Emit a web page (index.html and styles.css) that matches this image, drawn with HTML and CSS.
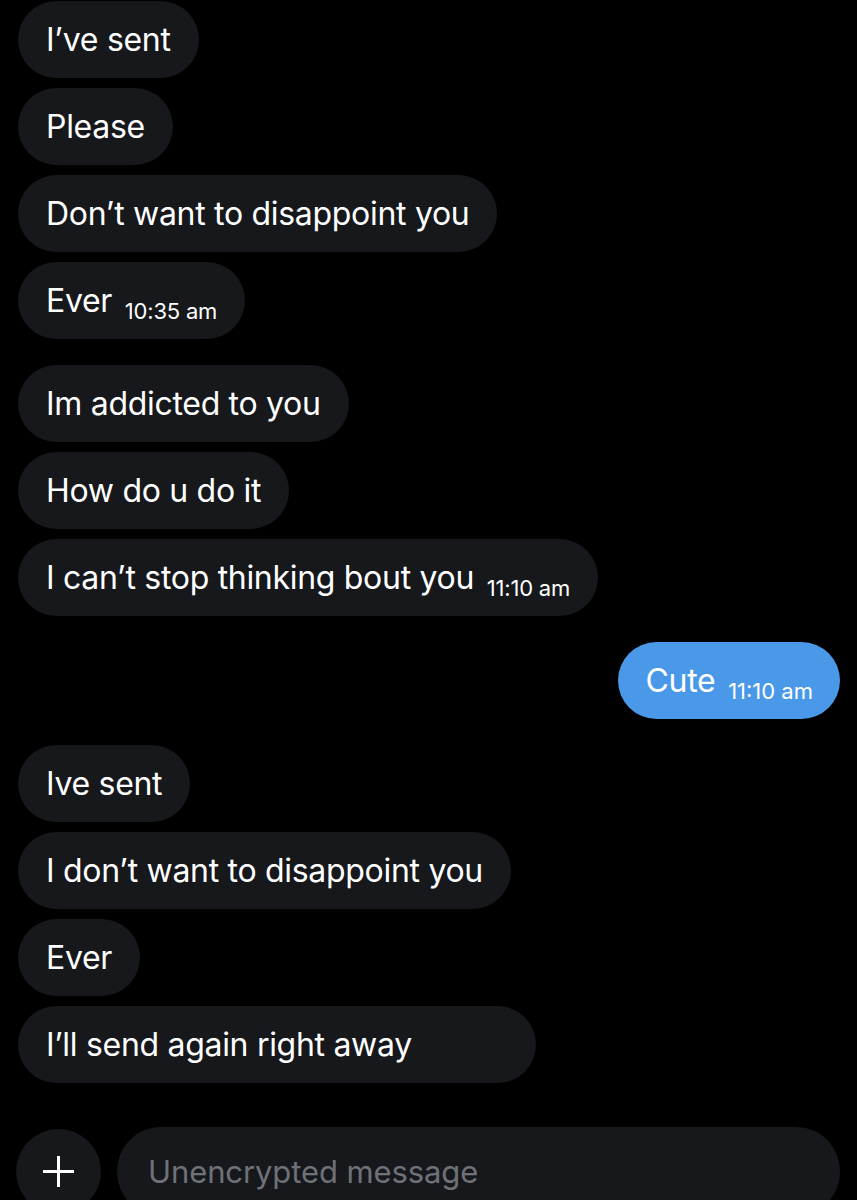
FILE: index.html
```html
<!DOCTYPE html>
<html lang="en">
<head>
    <meta charset="UTF-8">
    <meta name="viewport" content="width=device-width, initial-scale=1.0">
    <title>Messages</title>
    <link rel="stylesheet" href="styles.css">
</head>
<body>
    <div class="thread">
        <div class="group">
            <div class="bubble">I’ve sent</div>
            <div class="bubble">Please</div>
            <div class="bubble">Don’t want to disappoint you</div>
            <div class="bubble">Ever <span class="time">10:35 am</span></div>
        </div>
        <div class="group">
            <div class="bubble">Im addicted to you</div>
            <div class="bubble">How do u do it</div>
            <div class="bubble">I can’t stop thinking bout you <span class="time">11:10 am</span></div>
        </div>
        <div class="group mine">
            <div class="bubble">Cute <span class="time">11:10 am</span></div>
        </div>
        <div class="group">
            <div class="bubble">Ive sent</div>
            <div class="bubble">I don’t want to disappoint you</div>
            <div class="bubble">Ever</div>
            <div class="bubble">I’ll send again right away <span class="time hidden">11:10 am</span></div>
        </div>
    </div>

    <div class="composer">
        <button class="plus" type="button">
            <svg width="31" height="31" viewBox="0 0 31 31">
                <path d="M15.5 0v31M0 15.5h31" stroke="#fff" stroke-width="3" fill="none"/>
            </svg>
        </button>
        <div class="input">Unencrypted message</div>
    </div>
</body>
</html>
```

FILE: styles.css
```css
html, body {
    height: 100%;
    overflow: hidden;
}
body {
    margin: 0;
    background: #000;
    color: #fff;
    font-family: Inter, "Noto Sans", sans-serif;
}
.thread {
    display: flex;
    flex-direction: column;
    gap: 26px;
    padding: 1px 18px 0;
}
.group {
    display: flex;
    flex-direction: column;
    align-items: flex-start;
    gap: 10px;
}
.group.mine {
    align-items: flex-end;
    margin-right: -1px;
}
.bubble {
    box-sizing: border-box;
    height: 77px;
    background: #16181c;
    border-radius: 39px;
    padding: 0 28px;
    font-size: 32px;
    line-height: 77px;
    letter-spacing: -0.3px;
    white-space: nowrap;
}
.mine .bubble {
    background: #4a99e9;
    padding-right: 27px;
}
.time {
    font-size: 22px;
    line-height: 1;
    letter-spacing: -0.2px;
    margin-left: 4px;
    position: relative;
    top: 7px;
}
.mine .time {
    letter-spacing: 0;
}
.time.hidden {
    visibility: hidden;
}
.composer {
    display: flex;
    align-items: center;
    gap: 16px;
    margin-top: 44px;
    padding: 0 17px 0 16px;
}
.plus {
    width: 85px;
    height: 85px;
    border-radius: 50%;
    border: none;
    background: #16181c;
    display: flex;
    align-items: center;
    justify-content: center;
    padding: 0;
    flex-shrink: 0;
}
.input {
    flex: 1;
    height: 89px;
    border-radius: 44px;
    background: #16181c;
    color: #6e7276;
    font-size: 31px;
    letter-spacing: -0.1px;
    line-height: 89px;
    padding-left: 31px;
}
```
